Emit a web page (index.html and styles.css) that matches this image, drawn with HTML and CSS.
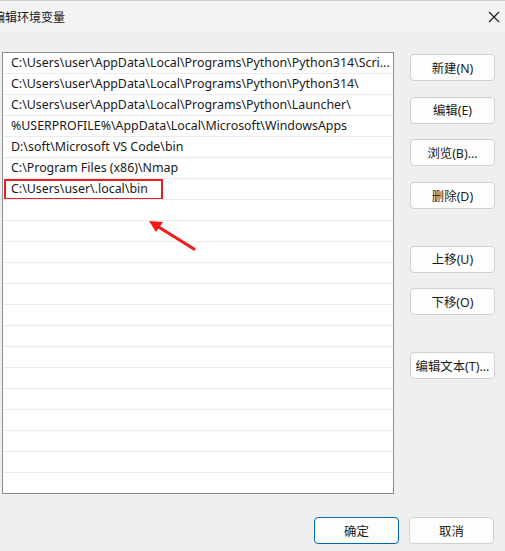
FILE: index.html
```html
<!DOCTYPE html>
<html lang="zh-CN">
<head>
    <meta charset="UTF-8">
    <meta name="viewport" content="width=device-width, initial-scale=1.0">
    <title>编辑环境变量</title>
    <link rel="stylesheet" href="styles.css">
</head>
<body>
    <div class="titlebar">
        <div class="title">编辑环境变量</div>
        <svg class="close" width="12" height="12" viewBox="0 0 12 12">
            <path d="M1 1L11 11M11 1L1 11" stroke="#1a1a1a" stroke-width="1.1" fill="none"/>
        </svg>
    </div>
    <div class="main">
        <div class="pathList">
            <div class="row">C:\Users\user\AppData\Local\Programs\Python\Python314\Scri...</div>
            <div class="row">C:\Users\user\AppData\Local\Programs\Python\Python314\</div>
            <div class="row">C:\Users\user\AppData\Local\Programs\Python\Launcher\</div>
            <div class="row">%USERPROFILE%\AppData\Local\Microsoft\WindowsApps</div>
            <div class="row">D:\soft\Microsoft VS Code\bin</div>
            <div class="row">C:\Program Files (x86)\Nmap</div>
            <div class="row marked">C:\Users\user\.local\bin</div>
            <div class="row"></div>
            <div class="row"></div>
            <div class="row"></div>
            <div class="row"></div>
            <div class="row"></div>
            <div class="row"></div>
            <div class="row"></div>
            <div class="row"></div>
            <div class="row"></div>
            <div class="row"></div>
            <div class="row"></div>
            <div class="row"></div>
            <div class="row"></div>
            <div class="row"></div>
            <svg class="arrow" width="60" height="40" viewBox="0 0 60 40">
                <path d="M47 32L10 9" stroke="#f01c1c" stroke-width="3.2" stroke-linecap="round"/>
                <path d="M2 4L16 5L9 15Z" fill="#f01c1c"/>
            </svg>
        </div>
        <div class="sideButtons">
            <button class="btn">新建(N)</button>
            <button class="btn">编辑(E)</button>
            <button class="btn">浏览(B)...</button>
            <button class="btn">删除(D)</button>
            <button class="btn spaced">上移(U)</button>
            <button class="btn">下移(O)</button>
            <button class="btn spaced">编辑文本(T)...</button>
        </div>
    </div>
    <div class="footer">
        <button class="btn primary">确定</button>
        <button class="btn">取消</button>
    </div>
</body>
</html>
```

FILE: styles.css
```css
body {
    margin: 0;
    width: 505px;
    height: 551px;
    overflow: hidden;
    background-color: #efefef;
    font-family: "Noto Sans", "Noto Sans CJK SC", sans-serif;
    font-size: 12.4px;
    color: #1a1a1a;
}
.titlebar {
    height: 31px;
    background-color: #f3f3f3;
    border-top: 1px solid #cfcfcf;
    box-sizing: border-box;
    display: flex;
    align-items: center;
    justify-content: space-between;
    padding-right: 5px;
}
.title {
    margin-left: -7px;
    font-family: "Noto Sans CJK SC", sans-serif;
    font-size: 12px;
}
.close {
    margin-top: 1px;
}
.main {
    display: flex;
    padding: 21px 0 0 2px;
}
.pathList {
    position: relative;
    width: 392px;
    height: 442px;
    box-sizing: border-box;
    border: 1px solid #8b8b8b;
    background-color: #fff;
    overflow: hidden;
}
.row {
    height: 20px;
    line-height: 20px;
    border-bottom: 1px solid #ebebeb;
    padding-left: 8px;
    white-space: nowrap;
    overflow: hidden;
}
.marked {
    position: relative;
}
.marked::after {
    content: "";
    position: absolute;
    left: 1px;
    top: 0;
    width: 159px;
    height: 21px;
    box-sizing: border-box;
    border: 2px solid #ec1c24;
}
.arrow {
    position: absolute;
    left: 144px;
    top: 164px;
}
.sideButtons {
    display: flex;
    flex-direction: column;
    gap: 15.7px;
    margin-left: 16px;
    padding-top: 2px;
}
.btn {
    width: 85px;
    height: 27px;
    padding: 0;
    border: 1px solid #d0d0d0;
    border-radius: 4px;
    background-color: #fdfdfd;
    font-family: "Noto Sans", "Noto Sans CJK SC", sans-serif;
    font-size: 12.4px;
    color: #1a1a1a;
}
.spaced {
    margin-top: 21px;
}
.footer {
    display: flex;
    justify-content: flex-end;
    gap: 10px;
    padding: 23px 11px 0 0;
}
.primary {
    border-color: #0067c0;
}
```
